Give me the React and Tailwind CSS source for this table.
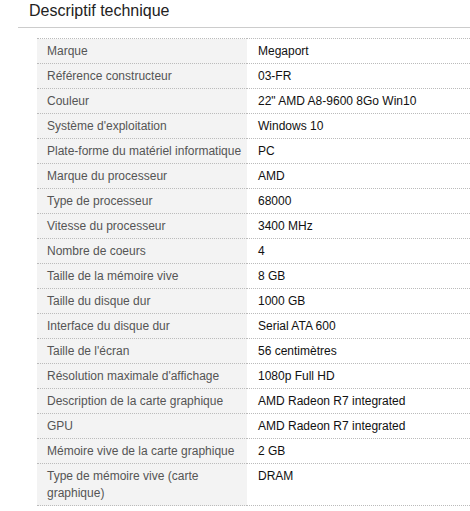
import React from "react";

const rows = [
  ["Marque", "Megaport"],
  ["Référence constructeur", "03-FR"],
  ["Couleur", "22\" AMD A8-9600 8Go Win10"],
  ["Système d'exploitation", "Windows 10"],
  ["Plate-forme du matériel informatique", "PC"],
  ["Marque du processeur", "AMD"],
  ["Type de processeur", "68000"],
  ["Vitesse du processeur", "3400 MHz"],
  ["Nombre de coeurs", "4"],
  ["Taille de la mémoire vive", "8 GB"],
  ["Taille du disque dur", "1000 GB"],
  ["Interface du disque dur", "Serial ATA 600"],
  ["Taille de l'écran", "56 centimètres"],
  ["Résolution maximale d'affichage", "1080p Full HD"],
  ["Description de la carte graphique", "AMD Radeon R7 integrated"],
  ["GPU", "AMD Radeon R7 integrated"],
  ["Mémoire vive de la carte graphique", "2 GB"],
  ["Type de mémoire vive (carte graphique)", "DRAM"],
];

export default function App() {
  return (
    <div
      className="w-[470px] h-[511px] bg-white pl-[18px] overflow-hidden"
      style={{ fontFamily: '"Liberation Sans", Arial, sans-serif' }}
    >
      <div className="border-b border-[#cccccc] pl-[11px] h-[28px] text-[16px] leading-[22px] text-[#222222]">
        Descriptif technique
      </div>
      <table className="mt-[10px] ml-[19px] w-[433px] table-fixed border-collapse text-[12px] leading-[17px]">
        <colgroup>
          <col className="w-[210px]" />
          <col />
        </colgroup>
        <tbody>
          {rows.map(([k, v], i) => (
            <tr
              key={i}
              className={
                "border-b border-dotted border-[#bbbbbb]" +
                (i === 0 ? " border-t" : "")
              }
            >
              <td className="bg-[#f3f3f3] pl-[10px] pr-[4px] pt-[4px] pb-[3px] align-top text-[#555555]">
                {k}
              </td>
              <td className="pl-[11px] pr-[4px] pt-[4px] pb-[3px] align-top text-[#111111]">
                {v}
              </td>
            </tr>
          ))}
        </tbody>
      </table>
    </div>
  );
}
